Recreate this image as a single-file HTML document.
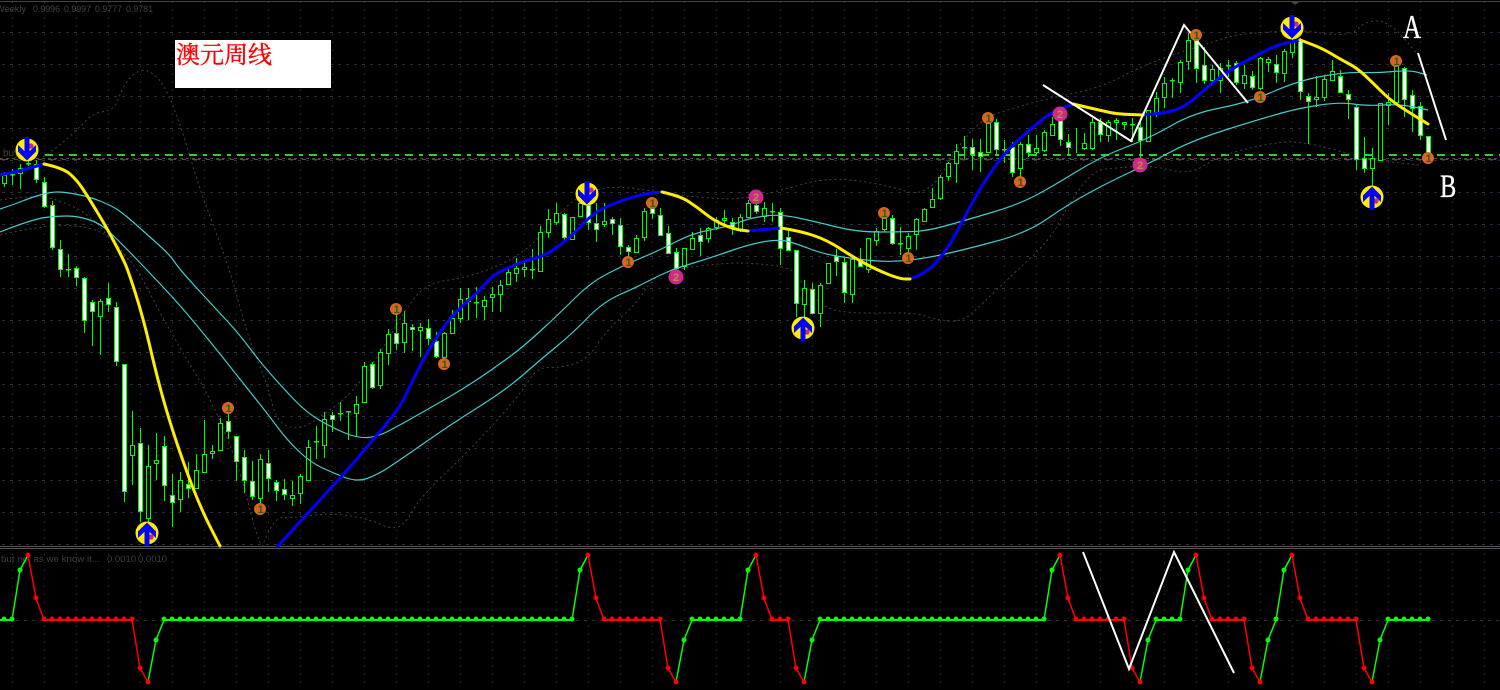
<!DOCTYPE html>
<html><head><meta charset="utf-8"><title>澳元周线</title>
<style>html,body{margin:0;padding:0;background:#000;width:1500px;height:690px;overflow:hidden}svg{display:block}</style></head>
<body>
<svg width="1500" height="690" viewBox="0 0 1500 690">
<defs>
<pattern id="gv" patternUnits="userSpaceOnUse" x="12" y="2" width="32" height="8"><rect width="1" height="1" fill="#3a3a3a"/></pattern>
<pattern id="gh" patternUnits="userSpaceOnUse" x="2" y="32" width="8" height="32"><rect width="3" height="1" fill="#2e2e40"/></pattern>
</defs>
<rect width="1500" height="690" fill="#000"/>
<rect y="2" width="1500" height="544" fill="url(#gh)"/>
<rect y="2" width="1500" height="544" fill="url(#gv)"/>
<rect y="550" width="1500" height="140" fill="url(#gv)"/>
<path d="M0 620.5H1500" stroke="#2e2e40" stroke-width="1" stroke-dasharray="3 5" shape-rendering="crispEdges"/>
<path d="M0 1.5H1500" stroke="#444" stroke-width="1" shape-rendering="crispEdges"/>
<path d="M0 546.5H1500M0 548.5H1500" stroke="#555" stroke-width="1" shape-rendering="crispEdges"/>
<path d="M1291 2H1299L1295 5Z" fill="#444"/>

<g font-family="Liberation Sans" font-size="9.5" fill="#444"><text x="-4" y="12" textLength="30" lengthAdjust="spacingAndGlyphs">Weekly</text><text x="33" y="12" textLength="27" lengthAdjust="spacingAndGlyphs">0.9996</text><text x="64" y="12" textLength="27" lengthAdjust="spacingAndGlyphs">0.9997</text><text x="95" y="12" textLength="27" lengthAdjust="spacingAndGlyphs">0.9777</text><text x="126" y="12" textLength="27" lengthAdjust="spacingAndGlyphs">0.9781</text></g>
<text x="3" y="156" font-family="Liberation Sans" font-size="10" fill="#444">buy</text>

<!-- horizontal levels -->
<g shape-rendering="crispEdges" fill="none">
<path d="M45 155H1500" stroke="#32cd32" stroke-width="2" stroke-dasharray="8 6 4 6"/>
<path d="M0 158.5H1500" stroke="#4a4a4a" stroke-width="1" stroke-dasharray="3 3"/>
<path d="M0 159.5H1500" stroke="#b22222" stroke-width="1" stroke-dasharray="8 6 4 6"/>
</g>

<!-- dotted envelope -->
<g fill="none" stroke="#444" stroke-width="1" stroke-dasharray="2 3">
<polyline class="s" points="43,157 57,148 80,127 93,113 115,110 123,85 140,68 157,75 170,97 183,133 200,190 220,243 232,278 250,343 267,383 277,423 300,430 320,417 353,393 385,345 407,307 427,283 470,277 517,258 547,230 573,198 610,185 660,192 693,197 743,200 793,187 817,180 850,179 893,187 917,195 937,183 957,147 983,118 1017,107 1050,98 1100,88 1150,62 1210,43 1233,35 1267,32 1300,30 1350,37 1367,20 1390,22 1420,57"/>
<polyline class="s" points="0,200 33,195 60,200 90,215 120,250 138,270 160,313 183,353 213,403 240,470 255,530 262,547"/>
<polyline class="s" points="0,235 40,226 80,225 110,235 130,262"/>
<polyline class="s" points="262,547 273,517 293,518 327,513 367,518 400,533 420,497 470,450 520,395 537,367 560,368 587,360 607,330 637,303 653,277 680,268 727,263 750,263 790,267 800,280 823,308 850,313 883,313 917,313 937,320 963,322 983,303 1010,277 1050,240 1067,207 1093,170 1117,168 1150,165 1190,175 1217,157 1260,145 1300,140 1370,160 1420,165"/>
</g>

<!-- candle wicks -->
<path fill="none" stroke="#00ff00" stroke-width="1" shape-rendering="crispEdges" d="M4.5 172V187M12.5 169V185M20.5 164V189M28.5 155V166M36.5 160V183M44.5 177V208M52.5 201V250M60.5 240V277M68.5 254V277M76.5 266V286M84.5 277V333M92.5 300V346M100.5 299V355M108.5 283V312M116.5 302V366M124.5 364V502M132.5 411V485M140.5 428V522M148.5 445V522M156.5 433V480M164.5 436V501M172.5 474V527M180.5 472V512M188.5 462V498M196.5 454V488M204.5 420V472M212.5 445V459M220.5 418V451M228.5 405V439M236.5 436V481M244.5 450V493M252.5 461V500M260.5 454V510M268.5 450V492M276.5 480V501M284.5 479V500M292.5 481V506M300.5 474V504M308.5 440V480M316.5 426V459M324.5 412V458M332.5 412V432M340.5 402V421M348.5 411V440M356.5 396V436M364.5 362V403M372.5 362V389M380.5 349V389M388.5 329V365M396.5 313V350M404.5 311V353M412.5 324V351M420.5 323V357M428.5 319V345M436.5 332V358M444.5 332V365M452.5 310V333M460.5 288V323M468.5 288V320M476.5 287V318M484.5 296V320M492.5 287V312M500.5 280V312M508.5 268V285M516.5 258V282M524.5 260V277M532.5 249V279M540.5 226V272M548.5 209V238M556.5 203V225M564.5 213V242M572.5 217V239M580.5 203V216M588.5 190V230M596.5 203V242M604.5 203V227M612.5 217V235M620.5 218V255M628.5 245V258M636.5 235V253M644.5 208V241M652.5 198V219M660.5 208V236M668.5 226V253M676.5 248V270M684.5 248V270M692.5 232V250M700.5 228V256M708.5 227V243M716.5 217V230M724.5 210V225M732.5 218V235M740.5 214V232M748.5 200V218M756.5 200V214M764.5 202V222M772.5 203V222M780.5 208V265M788.5 230V250M796.5 250V317M804.5 280V317M812.5 283V313M820.5 283V327M828.5 263V283M836.5 249V276M844.5 258V303M852.5 255V303M860.5 248V267M868.5 238V273M876.5 228V246M884.5 210V232M892.5 215V245M900.5 227V255M908.5 233V258M916.5 218V250M924.5 208V222M932.5 188V207M940.5 175V200M948.5 162V181M956.5 144V183M964.5 136V159M972.5 139V170M980.5 139V172M988.5 118V152M996.5 119V155M1004.5 140V163M1012.5 142V177M1020.5 142V177M1028.5 135V157M1036.5 135V155M1044.5 130V152M1052.5 117V135M1060.5 114V146M1068.5 134V155M1076.5 128V153M1084.5 133V150M1092.5 118V150M1100.5 118V142M1108.5 120V142M1116.5 118V140M1124.5 122V130M1132.5 118V142M1140.5 122V158M1148.5 110V141M1156.5 92V117M1164.5 77V108M1172.5 78V98M1180.5 60V93M1188.5 33V70M1196.5 33V83M1204.5 47V84M1212.5 65V83M1220.5 63V93M1228.5 60V77M1236.5 61V85M1244.5 65V89M1252.5 71V90M1260.5 57V90M1268.5 57V72M1276.5 55V83M1284.5 49V82M1292.5 38V58M1300.5 38V100M1308.5 93V144M1316.5 76V107M1324.5 76V101M1332.5 60V80M1340.5 70V93M1348.5 90V119M1356.5 105V170M1364.5 137V173M1372.5 148V187M1380.5 103V161M1388.5 93V125M1396.5 62V102M1404.5 67V117M1412.5 90V132M1420.5 102V140M1428.5 136V163"/>
<!-- hollow bodies -->
<path fill="#000" stroke="#00ff00" stroke-width="1" shape-rendering="crispEdges" d="M2.5 175.5h4v8h-4zM18.5 168.5h4v5h-4zM98.5 301.5h4v15h-4zM130.5 445.5h4v10h-4zM146.5 466.5h4v52h-4zM154.5 460.5h4v3h-4zM178.5 480.5h4v19h-4zM194.5 470.5h4v18h-4zM202.5 454.5h4v18h-4zM210.5 451.5h4v2h-4zM218.5 423.5h4v27h-4zM258.5 459.5h4v39h-4zM290.5 495.5h4v3h-4zM298.5 476.5h4v17h-4zM306.5 447.5h4v33h-4zM322.5 419.5h4v26h-4zM354.5 404.5h4v9h-4zM362.5 366.5h4v36h-4zM378.5 352.5h4v33h-4zM386.5 334.5h4v19h-4zM402.5 323.5h4v19h-4zM418.5 327.5h4v3h-4zM442.5 333.5h4v24h-4zM450.5 318.5h4v15h-4zM458.5 299.5h4v19h-4zM466.5 298.5h4v3h-4zM482.5 300.5h4v6h-4zM490.5 294.5h4v3h-4zM498.5 285.5h4v9h-4zM506.5 272.5h4v12h-4zM514.5 268.5h4v5h-4zM522.5 267.5h4v2h-4zM538.5 232.5h4v39h-4zM546.5 219.5h4v13h-4zM554.5 213.5h4v9h-4zM570.5 217.5h4v22h-4zM578.5 203.5h4v13h-4zM602.5 221.5h4v3h-4zM634.5 238.5h4v14h-4zM642.5 211.5h4v26h-4zM682.5 248.5h4v18h-4zM690.5 238.5h4v11h-4zM706.5 228.5h4v10h-4zM714.5 220.5h4v7h-4zM722.5 218.5h4v2h-4zM738.5 217.5h4v13h-4zM746.5 203.5h4v14h-4zM762.5 208.5h4v8h-4zM802.5 288.5h4v16h-4zM818.5 285.5h4v28h-4zM826.5 263.5h4v20h-4zM850.5 259.5h4v35h-4zM866.5 238.5h4v31h-4zM874.5 231.5h4v9h-4zM882.5 218.5h4v11h-4zM906.5 236.5h4v12h-4zM914.5 219.5h4v15h-4zM922.5 209.5h4v12h-4zM930.5 199.5h4v8h-4zM938.5 177.5h4v21h-4zM946.5 163.5h4v13h-4zM954.5 151.5h4v12h-4zM986.5 123.5h4v29h-4zM1018.5 144.5h4v24h-4zM1034.5 148.5h4v4h-4zM1042.5 132.5h4v18h-4zM1050.5 124.5h4v11h-4zM1082.5 143.5h4v5h-4zM1090.5 122.5h4v26h-4zM1106.5 122.5h4v13h-4zM1114.5 120.5h4v2h-4zM1122.5 122.5h4v2h-4zM1146.5 110.5h4v31h-4zM1154.5 98.5h4v14h-4zM1162.5 83.5h4v14h-4zM1178.5 62.5h4v20h-4zM1186.5 40.5h4v21h-4zM1210.5 69.5h4v11h-4zM1218.5 68.5h4v12h-4zM1242.5 75.5h4v8h-4zM1258.5 58.5h4v30h-4zM1266.5 59.5h4v3h-4zM1282.5 51.5h4v22h-4zM1290.5 42.5h4v10h-4zM1314.5 97.5h4v2h-4zM1322.5 79.5h4v18h-4zM1330.5 71.5h4v9h-4zM1370.5 158.5h4v10h-4zM1378.5 103.5h4v57h-4zM1386.5 102.5h4v3h-4zM1394.5 62.5h4v40h-4z"/>
<!-- white bodies -->
<path fill="#fff" stroke="#00ff00" stroke-width="1" shape-rendering="crispEdges" d="M34.5 164.5h4v15h-4zM42.5 182.5h4v24h-4zM50.5 205.5h4v42h-4zM58.5 249.5h4v20h-4zM74.5 268.5h4v9h-4zM82.5 278.5h4v42h-4zM90.5 302.5h4v9h-4zM106.5 298.5h4v6h-4zM114.5 307.5h4v54h-4zM122.5 364.5h4v127h-4zM138.5 443.5h4v68h-4zM162.5 446.5h4v39h-4zM170.5 495.5h4v7h-4zM186.5 484.5h4v4h-4zM226.5 421.5h4v10h-4zM234.5 436.5h4v25h-4zM242.5 457.5h4v23h-4zM250.5 481.5h4v15h-4zM266.5 463.5h4v15h-4zM274.5 482.5h4v8h-4zM282.5 489.5h4v5h-4zM330.5 415.5h4v4h-4zM370.5 364.5h4v23h-4zM394.5 333.5h4v10h-4zM410.5 327.5h4v2h-4zM426.5 328.5h4v10h-4zM434.5 341.5h4v15h-4zM562.5 214.5h4v23h-4zM586.5 205.5h4v17h-4zM594.5 223.5h4v6h-4zM610.5 219.5h4v4h-4zM618.5 225.5h4v21h-4zM626.5 247.5h4v4h-4zM650.5 208.5h4v5h-4zM658.5 215.5h4v20h-4zM666.5 233.5h4v20h-4zM674.5 252.5h4v16h-4zM698.5 235.5h4v6h-4zM730.5 222.5h4v5h-4zM754.5 205.5h4v6h-4zM778.5 212.5h4v36h-4zM786.5 237.5h4v13h-4zM794.5 250.5h4v53h-4zM810.5 289.5h4v24h-4zM834.5 256.5h4v5h-4zM842.5 262.5h4v30h-4zM858.5 259.5h4v7h-4zM890.5 218.5h4v25h-4zM970.5 147.5h4v7h-4zM978.5 152.5h4v4h-4zM994.5 122.5h4v27h-4zM1010.5 147.5h4v25h-4zM1026.5 144.5h4v8h-4zM1058.5 118.5h4v21h-4zM1066.5 142.5h4v5h-4zM1098.5 122.5h4v12h-4zM1138.5 127.5h4v13h-4zM1194.5 39.5h4v29h-4zM1202.5 65.5h4v15h-4zM1234.5 63.5h4v19h-4zM1250.5 76.5h4v11h-4zM1274.5 64.5h4v8h-4zM1298.5 40.5h4v51h-4zM1306.5 96.5h4v5h-4zM1338.5 76.5h4v16h-4zM1346.5 94.5h4v5h-4zM1354.5 107.5h4v52h-4zM1362.5 158.5h4v10h-4zM1402.5 68.5h4v31h-4zM1410.5 95.5h4v13h-4zM1418.5 106.5h4v29h-4zM1426.5 136.5h4v18h-4z"/>
<!-- doji bars -->
<path fill="none" stroke="#00ff00" stroke-width="1.5" shape-rendering="crispEdges" d="M10 174.5h5M26 163.5h5M66 269.5h5M314 441.5h5M338 413.5h5M346 411.5h5M474 302.5h5M530 269.5h5M770 211.5h5M898 243.5h5M962 147.5h5M1002 149.5h5M1130 124.5h5M1170 80.5h5M1226 65.5h5"/>

<!-- cyan averages -->
<g fill="none" stroke="#44cccc" stroke-width="1.2">
<polyline class="s" points="0,209 15,204 30,198 50,192 65,192 90,197 110,205 123,213 150,237 170,255 180,270 217,310 240,335 260,362 283,388 307,413 333,428 357,438 377,437 400,425 430,408 463,389 493,369 523,347 560,313 590,283 620,267 660,250 693,233 727,227 750,218 780,214 817,222 857,232 900,232 927,231 963,221 1017,205 1050,188 1100,157 1150,138 1193,113 1247,103 1300,80 1347,72 1377,73 1410,70 1427,75"/>
<polyline class="s" points="0,232 33,219 57,216 77,216 100,223 120,242 147,270 180,305 217,350 243,383 267,413 287,440 310,462 333,473 357,482 377,475 400,460 450,425 507,389 540,360 573,333 603,302 637,287 660,275 677,268 710,258 750,244 780,239 800,245 823,254 863,260 893,262 927,258 963,250 1027,233 1067,205 1107,183 1150,163 1193,140 1267,117 1300,108 1340,102 1367,106 1400,104 1428,110"/>
</g>

<!-- trend line -->
<g fill="none" stroke-width="3" stroke-linejoin="round" stroke-linecap="round">
<g stroke="#0000ff">
<polyline class="s" points="0,175 20,171 44,164"/>
<polyline class="s" points="278,546 317,503 343,475 373,440 400,407 408,390 427,352 450,317 477,293 493,275 510,267 527,260 547,255 573,235 593,213 617,202 643,194 662,192"/>
<polyline points="748,231 781,228"/>
<polyline class="s" points="910,279 927,273 947,250 963,220 983,183 1007,150 1033,127 1050,113 1073,104"/>
<polyline class="s" points="1143,115 1170,113 1190,103 1207,87 1233,68 1257,55 1277,45 1300,40"/>
</g>
<g stroke="#ffee00">
<polyline class="s" points="44,164 63,168 77,180 90,200 108,230 122,257 128,270 143,317 157,377 170,423 187,473 203,513 220,546"/>
<polyline class="s" points="662,192 680,196 697,207 713,220 733,229 748,231"/>
<polyline class="s" points="781,228 800,231 827,240 853,257 877,270 900,279 910,279"/>
<polyline class="s" points="1073,104 1103,111 1117,114 1143,115"/>
<polyline class="s" points="1300,40 1320,47 1340,59 1357,68 1373,83 1390,100 1410,113 1428,124"/>
</g>
</g>

<!-- white hand-drawn lines -->
<g fill="none" stroke="#fff" stroke-width="2">
<polyline points="1043,85 1131,141 1184,25 1248,103"/>
<polyline points="1418,53 1446,140"/>
</g>

<!-- arrow markers -->
<g>
<g transform="translate(27,150)"><circle r="11.5" fill="#ffee00"/><circle cx="4" cy="-4" r="2.6" fill="#d0208a"/><path d="M-9-5L0 3.5L9-5V1.5L0 10.5L-9 1.5Z M-2.5-13H2.5V5H-2.5Z" fill="#0000ff"/></g>
<g transform="translate(587,194)"><circle r="11.5" fill="#ffee00"/><circle cx="4" cy="-4" r="2.6" fill="#d0208a"/><path d="M-9-5L0 3.5L9-5V1.5L0 10.5L-9 1.5Z M-2.5-13H2.5V5H-2.5Z" fill="#0000ff"/></g>
<g transform="translate(1292,28)"><circle r="11.5" fill="#ffee00"/><circle cx="4" cy="-4" r="2.6" fill="#d0208a"/><path d="M-9-5L0 3.5L9-5V1.5L0 10.5L-9 1.5Z M-2.5-13H2.5V5H-2.5Z" fill="#0000ff"/></g>
<g transform="translate(147,533) scale(1,-1)"><circle r="11.5" fill="#ffee00"/><circle cx="4" cy="-4" r="2.6" fill="#d0208a"/><path d="M-9-5L0 3.5L9-5V1.5L0 10.5L-9 1.5Z M-2.5-13H2.5V5H-2.5Z" fill="#0000ff"/></g>
<g transform="translate(803,328) scale(1,-1)"><circle r="11.5" fill="#ffee00"/><circle cx="4" cy="-4" r="2.6" fill="#d0208a"/><path d="M-9-5L0 3.5L9-5V1.5L0 10.5L-9 1.5Z M-2.5-13H2.5V5H-2.5Z" fill="#0000ff"/></g>
<g transform="translate(1372,197) scale(1,-1)"><circle r="11.5" fill="#ffee00"/><circle cx="4" cy="-4" r="2.6" fill="#d0208a"/><path d="M-9-5L0 3.5L9-5V1.5L0 10.5L-9 1.5Z M-2.5-13H2.5V5H-2.5Z" fill="#0000ff"/></g>
</g>

<!-- numbered markers -->
<g fill="#d9661f">
<circle cx="228" cy="408" r="6"/><circle cx="260" cy="509" r="6"/><circle cx="396" cy="309" r="6"/><circle cx="444" cy="364" r="6"/><circle cx="628" cy="262" r="6"/><circle cx="652" cy="203" r="6"/><circle cx="884" cy="213" r="6"/><circle cx="908" cy="258" r="6"/><circle cx="988" cy="118" r="6"/><circle cx="1020" cy="182" r="6"/><circle cx="1196" cy="35" r="6"/><circle cx="1260" cy="97" r="6"/><circle cx="1396" cy="61" r="6"/><circle cx="1428" cy="158" r="6"/>
</g>
<g fill="#cc2a8e">
<circle cx="676" cy="277" r="7.5"/><circle cx="756" cy="197" r="7.5"/><circle cx="1060" cy="114" r="7.5"/><circle cx="1140" cy="165" r="7.5"/>
</g>
<g font-family="Liberation Sans" font-size="11" font-weight="bold" text-anchor="middle" fill="#2f5a20">
<text x="228.5" y="412">1</text><text x="260.5" y="513">1</text><text x="396.5" y="313">1</text><text x="444.5" y="368">1</text><text x="628.5" y="266">1</text><text x="652.5" y="207">1</text><text x="884.5" y="217">1</text><text x="908.5" y="262">1</text><text x="988.5" y="122">1</text><text x="1020.5" y="186">1</text><text x="1196.5" y="39">1</text><text x="1260.5" y="101">1</text><text x="1396.5" y="65">1</text><text x="1428.5" y="162">1</text>
</g>
<g font-family="Liberation Sans" font-size="11" font-weight="bold" text-anchor="middle" fill="#c88a30">
<text x="676" y="281">2</text><text x="756" y="201">2</text><text x="1060" y="118">2</text><text x="1140" y="169">2</text>
</g>

<!-- label box -->
<rect x="175" y="40" width="156" height="48" fill="#fff"/>
<text x="176" y="63" font-family="'Liberation Serif','Noto Serif CJK SC',serif" font-size="24" fill="#ff0000" stroke="#ff0000" stroke-width=".4">澳元周线</text>

<!-- A / B -->
<text transform="translate(1403,38) scale(.74,1)" font-family="Liberation Serif" font-size="34" fill="#fff" stroke="#fff" stroke-width=".35">A</text>
<text transform="translate(1440,197) scale(.74,1)" font-family="Liberation Serif" font-size="33" fill="#fff" stroke="#fff" stroke-width=".35">B</text>

<!-- lower pane text -->
<g font-family="Liberation Sans" font-size="9.5" fill="#3f3f3f">
<text x="1" y="562" textLength="99" lengthAdjust="spacingAndGlyphs">but not as we know it...</text><text x="107" y="562">0.0010</text><text x="138" y="562">0.0010</text>
</g>

<!-- oscillator lines -->
<g fill="none" stroke-width="1.5">
<g stroke="#00ff00">
<polyline points="12,620 20,570 28,555"/>
<polyline points="148,682 156,640 164,620"/>
<polyline points="572,620 580,570 588,555"/>
<polyline points="676,682 684,640 692,620"/>
<polyline points="740,620 748,570 756,555"/>
<polyline points="804,682 812,640 820,620"/>
<polyline points="1044,620 1052,570 1060,555"/>
<polyline points="1140,682 1148,640 1156,620"/>
<polyline points="1180,620 1188,570 1196,555"/>
<polyline points="1260,682 1268,640 1276,620 1284,570 1292,555"/>
<polyline points="1372,682 1380,640 1388,620"/>
<path stroke-width="2" d="M0 620H12M164 620H572M692 620H740M820 620H1044M1156 620H1180M1388 620H1428" shape-rendering="crispEdges"/>
</g>
<g stroke="#ff0000">
<polyline points="28,555 36,598 44,620"/>
<polyline points="132,620 140,668 148,682"/>
<polyline points="588,555 596,598 604,620"/>
<polyline points="660,620 668,668 676,682"/>
<polyline points="756,555 764,598 772,620"/>
<polyline points="788,620 796,668 804,682"/>
<polyline points="1060,555 1068,598 1076,620"/>
<polyline points="1124,620 1132,668 1140,682"/>
<polyline points="1196,555 1204,598 1212,620"/>
<polyline points="1244,620 1252,668 1260,682"/>
<polyline points="1292,555 1300,598 1308,620"/>
<polyline points="1356,620 1364,668 1372,682"/>
<path stroke-width="2" d="M44 620H132M604 620H660M772 620H788M1076 620H1124M1212 620H1244M1308 620H1356" shape-rendering="crispEdges"/>
</g>
</g>
<!-- oscillator dots -->
<g fill="none" stroke-width="5" stroke-linecap="round">
<path stroke="#00ff00" stroke-dasharray="0 8" d="M4 619H13M164 619H573M692 619H741M820 619H1045M1156 619H1181M1276 619H1277M1388 619H1429"/>
<path stroke="#00ff00" d="M20 570h0M156 640h0M580 570h0M684 640h0M748 570h0M812 640h0M1052 570h0M1148 640h0M1188 570h0M1268 640h0M1284 570h0M1380 640h0"/>
<path stroke="#ff0000" stroke-dasharray="0 8" d="M44 619H133M604 619H661M772 619H789M1076 619H1125M1212 619H1245M1308 619H1357"/>
<path stroke="#ff0000" d="M28 555h0M36 598h0M140 668h0M148 682h0M588 555h0M596 598h0M668 668h0M676 682h0M756 555h0M764 598h0M796 668h0M804 682h0M1060 555h0M1068 598h0M1132 668h0M1140 682h0M1196 555h0M1204 598h0M1252 668h0M1260 682h0M1292 555h0M1300 598h0M1364 668h0M1372 682h0"/>
</g>

<!-- lower white lines -->
<polyline points="1083,552 1129,669 1174,552 1234,673" fill="none" stroke="#fff" stroke-width="2"/>
</svg>
<script>
document.querySelectorAll('polyline.s').forEach(function(e){
  var p=e.getAttribute('points').trim().split(/\s+/).map(function(s){return s.split(',').map(Number)});
  var d='M'+p[0][0]+' '+p[0][1];
  for(var i=1;i<p.length-1;i++){
    var mx=(p[i][0]+p[i+1][0])/2,my=(p[i][1]+p[i+1][1])/2;
    d+='Q'+p[i][0]+' '+p[i][1]+' '+mx+' '+my;
  }
  var l=p[p.length-1];d+='L'+l[0]+' '+l[1];
  e.outerHTML='<path d="'+d+'"/>';
});
</script>
</body></html>
